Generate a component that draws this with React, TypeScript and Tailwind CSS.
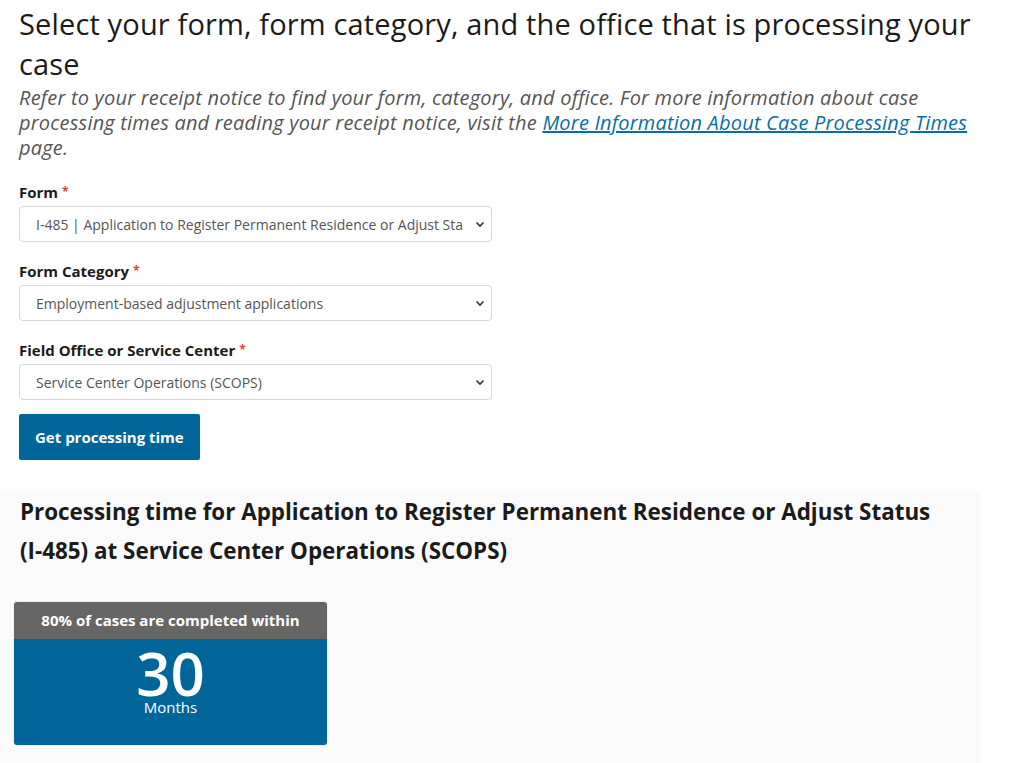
import React from "react";

const fields = [
  {
    label: "Form",
    value: "I-485 | Application to Register Permanent Residence or Adjust Status",
  },
  { label: "Form Category", value: "Employment-based adjustment applications" },
  { label: "Field Office or Service Center", value: "Service Center Operations (SCOPS)" },
];

function Chevron() {
  return (
    <svg width="10" height="7" viewBox="0 0 10 7" className="shrink-0">
      <path d="M1.5 1.5 5 5l3.5-3.5" fill="none" stroke="#333" strokeWidth="1.6" />
    </svg>
  );
}

function SelectBox({ label, value }: { label: string; value: string }) {
  return (
    <div className="mb-[19px]">
      <p className="text-[15px] font-bold text-[#1b1b1b] leading-[20px] mb-[4px]">
        {label} <span className="text-[#e0403a] text-[12px] align-top">*</span>
      </p>
      <div className="w-[473px] h-[36px] border border-[#d6d6d6] rounded-[4px] bg-white flex items-center pl-[16px] pr-[6px] gap-3">
        <span className="flex-1 overflow-hidden whitespace-nowrap text-[14px] text-[#555]">{value}</span>
        <Chevron />
      </div>
    </div>
  );
}

export default function App() {
  return (
    <div className="w-[1024px] h-[763px] overflow-hidden bg-white font-['Open_Sans',sans-serif]">
      <div className="pl-[19px] pr-[4px] pt-[4px]">
        <h1 className="w-[975px] text-[29px] leading-[40px] tracking-[0.15px] text-[#1b1b1b] font-normal">
          Select your form, form category, and the office that is processing your case
        </h1>
        <p className="text-[20px] leading-[25px] tracking-[0.2px] italic text-[#555] mt-[1px] whitespace-nowrap">
          Refer to your receipt notice to find your form, category, and office. For more
          information about case
          <br />
          processing times and reading your receipt notice, visit the{" "}
          <a href="#" className="text-[#0a6ea3] underline">
            More Information About Case Processing Times
          </a>
          <br />
          page.
        </p>

        <div className="mt-[22px]">
          {fields.map((f) => (
            <SelectBox key={f.label} label={f.label} value={f.value} />
          ))}
        </div>

        <button className="-mt-[5px] h-[46px] px-[16px] bg-[#006699] text-white text-[15px] font-bold rounded-[2px]">
          Get processing time
        </button>
      </div>

      <section className="mt-[32px] w-[980px] h-[400px] bg-[#fafafa]">
        <h2 className="pl-[20px] text-[22.4px] leading-[39px] font-bold text-[#1b1b1b]">
          Processing time for Application to Register Permanent Residence or Adjust Status
          <br />
          (I-485) at Service Center Operations (SCOPS)
        </h2>

        <div className="ml-[14px] mt-[32px] w-[313px] rounded-[3px] overflow-hidden shadow-[0_0_1px_rgba(0,0,0,0.4)]">
          <div className="h-[37px] bg-[#666] flex items-center justify-center text-white text-[15px] font-bold">
            80% of cases are completed within
          </div>
          <div className="h-[106px] bg-[#006699] flex flex-col items-center text-white pt-[12px]">
            <span className="text-[60px] leading-[44px] font-semibold">30</span>
            <span className="text-[15px] leading-[18px] mt-[3px]">Months</span>
          </div>
        </div>
      </section>
    </div>
  );
}
